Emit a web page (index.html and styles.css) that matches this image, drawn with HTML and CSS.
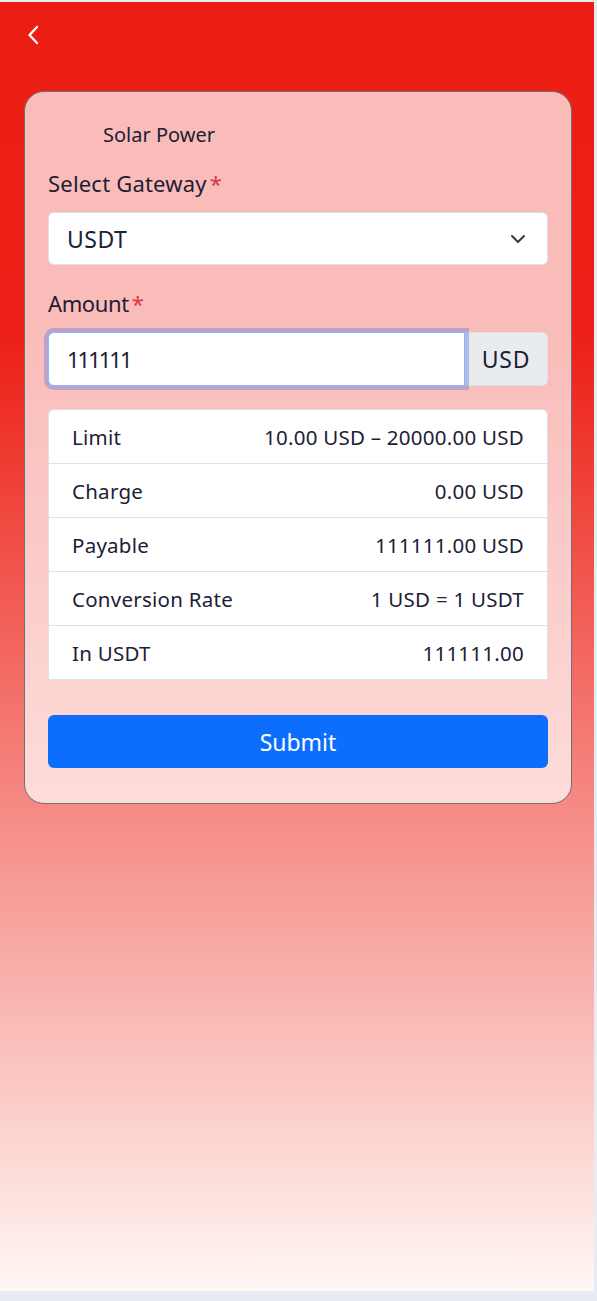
FILE: index.html
```html
<!DOCTYPE html>
<html lang="en">
<head>
    <meta charset="UTF-8">
    <meta name="viewport" content="width=device-width, initial-scale=1.0">
    <title>Deposit</title>
    <link rel="stylesheet" href="styles.css">
</head>
<body>
    <div class="app">
        <div class="topbar">
            <a class="back" href="#">
                <svg width="14" height="20" viewBox="0 0 14 20"><path d="M11 2 L3.5 10 L11 18" fill="none" stroke="#fff" stroke-width="2.4" stroke-linecap="round" stroke-linejoin="round"/></svg>
            </a>
        </div>

        <div class="card">
            <div class="plan-name">Solar Power</div>

            <div class="form-group">
                <label>Select Gateway<span class="req">*</span></label>
                <div class="select">
                    <span>USDT</span>
                    <svg width="16" height="10" viewBox="0 0 16 10"><path d="M2 2 L8 8 L14 2" fill="none" stroke="#343a40" stroke-width="2" stroke-linecap="round" stroke-linejoin="round"/></svg>
                </div>
            </div>

            <div class="form-group">
                <label class="short">Amount<span class="req">*</span></label>
                <div class="input-group">
                    <div class="amount-input">111111</div>
                    <div class="addon">USD</div>
                </div>
            </div>

            <ul class="summary">
                <li><span>Limit</span><span>10.00 USD – 20000.00 USD</span></li>
                <li><span>Charge</span><span>0.00 USD</span></li>
                <li><span>Payable</span><span>111111.00 USD</span></li>
                <li><span>Conversion Rate</span><span>1 USD = 1 USDT</span></li>
                <li><span>In USDT</span><span>111111.00</span></li>
            </ul>

            <button class="submit">Submit</button>
        </div>
    </div>
</body>
</html>
```
FILE: styles.css
```css
body {
    margin: 0;
    background-color: #e7ecf4;
    font-family: "Noto Sans", "Liberation Sans", sans-serif;
    color: #1d2035;
}
.app {
    width: 594px;
    height: 1289px;
    margin-top: 2px;
    background: linear-gradient(180deg, #ec1e14 0%, #ec2016 26%, #fff7f4 100%);
    overflow: hidden;
}
.topbar {
    height: 89px;
    padding-left: 26px;
    box-sizing: border-box;
    padding-top: 23px;
}
.back {
    display: inline-block;
}
.card {
    width: 548px;
    margin-left: 24px;
    box-sizing: border-box;
    padding: 30px 23px 35px;
    border: 1px solid #6f6f78;
    border-radius: 20px;
    background-color: rgba(255, 255, 255, 0.7);
}
.plan-name {
    font-size: 20px;
    line-height: 26px;
    padding-left: 55px;
    margin-bottom: 20px;
}
.form-group {
    margin-bottom: 23px;
}
label {
    display: block;
    font-size: 22px;
    line-height: 30px;
    margin-bottom: 14px;
    letter-spacing: 0.2px;
}
label.short {
    letter-spacing: -0.4px;
}
.req {
    color: #dc3545;
    margin-left: 3px;
}
.select {
    display: flex;
    align-items: center;
    justify-content: space-between;
    height: 53px;
    box-sizing: border-box;
    padding: 0 21px 0 18px;
    background-color: #fff;
    border: 1px solid #dee2e6;
    border-radius: 6px;
    font-size: 23px;
    letter-spacing: 0.5px;
}
.input-group {
    display: flex;
    height: 54px;
}
.amount-input {
    flex: 1;
    display: flex;
    align-items: center;
    padding-left: 18px;
    background-color: #fff;
    border: 1px solid #86b7fe;
    border-radius: 6px 0 0 6px;
    box-shadow: 0 0 0 4px rgba(112, 130, 220, 0.45);
    font-size: 22px;
    letter-spacing: -2px;
    position: relative;
    z-index: 1;
}
.addon {
    width: 82px;
    display: flex;
    align-items: center;
    justify-content: center;
    background-color: #e9ecef;
    border: 1px solid #dee2e6;
    border-left: none;
    border-radius: 0 6px 6px 0;
    font-size: 23px;
    letter-spacing: 0.8px;
}
.summary {
    list-style: none;
    margin: 0 0 35px;
    padding: 0;
    background-color: #fff;
    border: 1px solid #dee2e6;
    border-bottom: none;
    border-radius: 6px 6px 0 0;
}
.summary li {
    display: flex;
    justify-content: space-between;
    align-items: center;
    height: 54px;
    box-sizing: border-box;
    padding: 0 23px;
    font-size: 20.5px;
    letter-spacing: 0.25px;
    border-bottom: 1px solid #e7dede;
}
.summary li:last-child {
    border-bottom: 1px solid #dee2e6;
}
.submit {
    display: block;
    width: 100%;
    height: 53px;
    border: none;
    border-radius: 6px;
    background-color: #0d6efd;
    color: #fff;
    font-family: inherit;
    font-size: 23px;
}
```
